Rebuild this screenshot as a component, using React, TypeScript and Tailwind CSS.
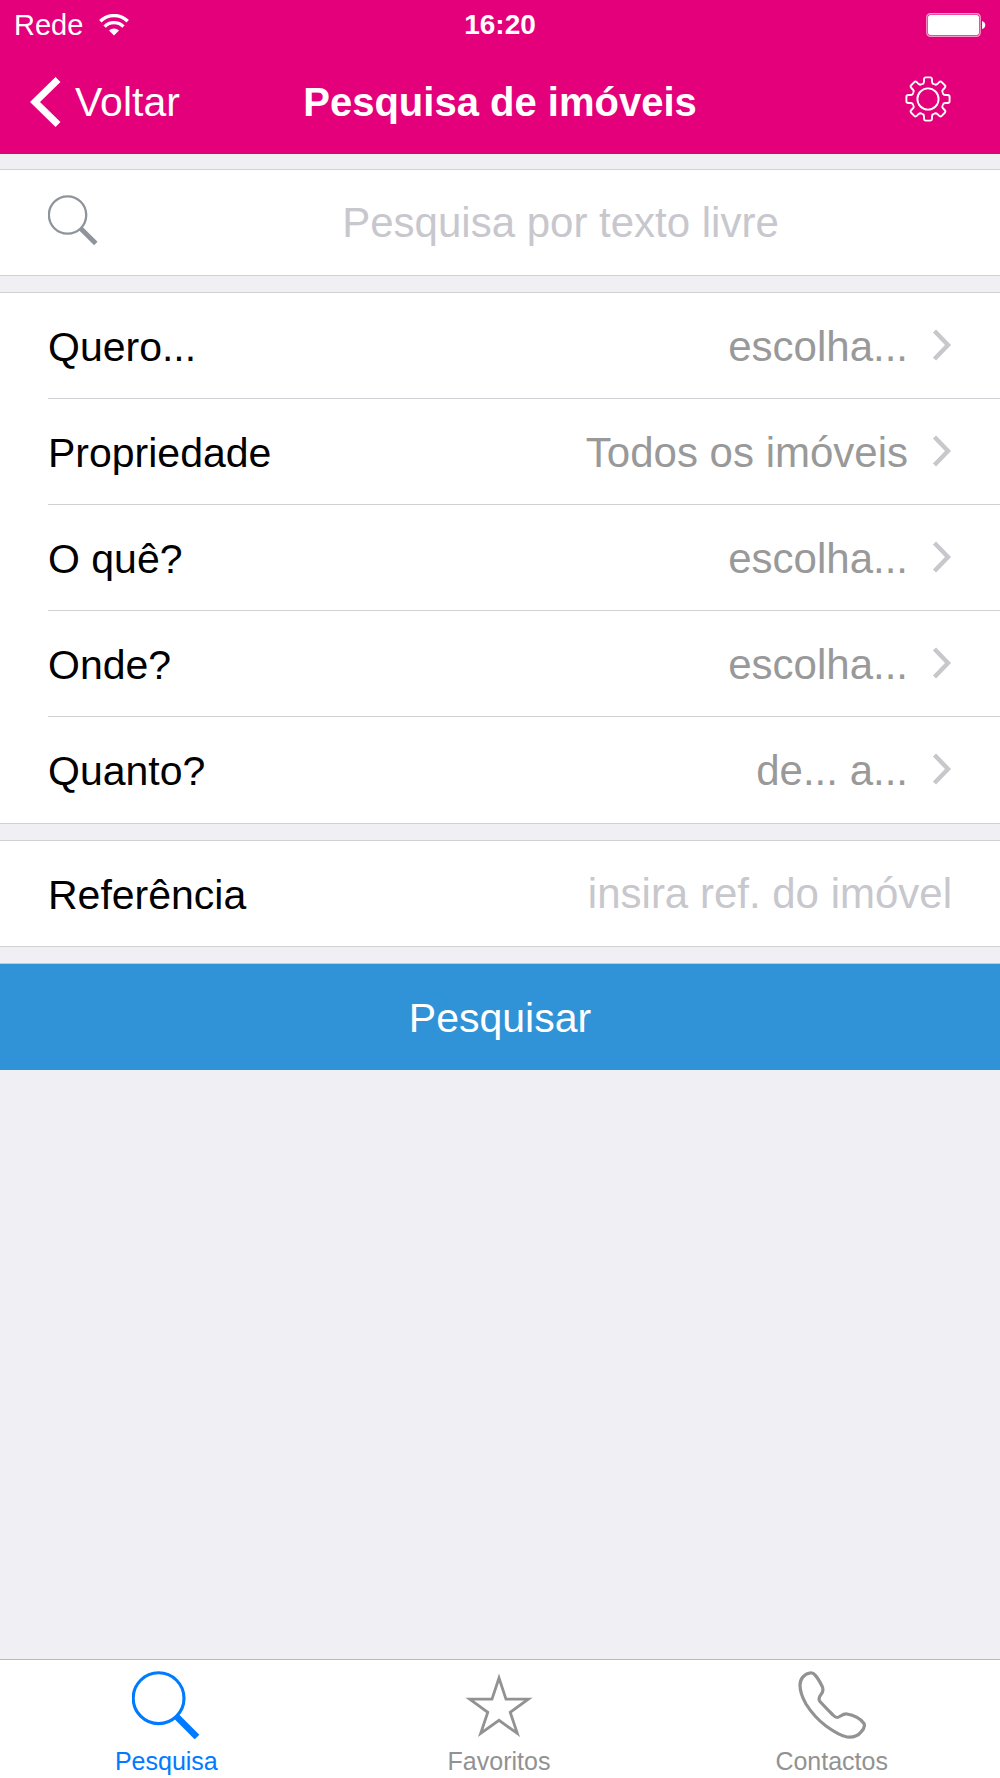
import type { ReactNode } from "react";

type FilterProps = { label: string; value: string }

const filters: FilterProps[] = [
  { label: 'Quero...', value: 'escolha...' },
  { label: 'Propriedade', value: 'Todos os imóveis' },
  { label: 'O quê?', value: 'escolha...' },
  { label: 'Onde?', value: 'escolha...' },
  { label: 'Quanto?', value: 'de... a...' },
];

function SearchIcon({ className }: { className?: string }) {
  return <svg viewBox="0 0 68 68" fill="none" stroke="currentColor" className={className} aria-hidden="true">
    <circle cx="26.6" cy="27.2" r="25.4" strokeWidth="3.1" />
    <path d="M44.5 45.5L65 66" strokeWidth="6.6" />
  </svg>;
}

function StarIcon() {
  return <svg viewBox="0 0 68 68" fill="none" stroke="currentColor" strokeWidth="2.8" strokeMiterlimit="10" className="size-[68px]" aria-hidden="true">
    <path d="M34 7L41 28.2H63.3L45.2 41.3L52.3 62.4L34 49.3L15.7 62.4L22.8 41.3L4.7 28.2H27Z" />
  </svg>;
}

function PhoneIcon() {
  return <svg viewBox="0 0 68 68" fill="none" stroke="currentColor" strokeWidth="3.2" strokeLinejoin="round" className="size-[68px]" aria-hidden="true">
    <path d="M12 2C6 3 2 8 2 14C2 20 4 26 8 33C13 41 20 49 28 55C35 60 42 65 49 66C55 66.5 60 65 63 61C66 58 67 55 66 52.5C63 48 56 44 49 43C44 42.5 42 46.5 39 46.5C37 46.5 36 45 34 43C30 39 26 35 22 30.5C20 28 21 26 23 23.5C25.5 20.5 25.5 18 24 15C22 11 20 7 17 4C15.5 2 14 1.7 12 2Z" />
  </svg>;
}

function GearIcon() {
  return <svg viewBox="-23 -23 46 46" fill="none" stroke="currentColor" strokeWidth="1.9" className="size-[46px]" aria-hidden="true">
    <circle r="10.6" />
    {[0, 45, 90, 135, 180, 225, 270, 315].map(angle => <path
      key={angle}
      transform={`rotate(${angle})`}
      d="M-6.3-15.2Q-4.2-14.6-4-17.5V-19.5Q-3.9-21.6-2.2-21.6H2.2Q3.9-21.6 4-19.5V-17.5Q4.2-14.6 6.3-15.2"
    />)}
  </svg>;
}

function WifiIcon() {
  return <svg viewBox="0 0 30 22" fill="none" stroke="currentColor" strokeWidth="3.4" className="h-[22px] w-[30px]" aria-hidden="true">
    <path d="M1.3 7.2A19.4 19.4 0 0 1 28.7 7.2" />
    <path d="M5.6 12.6A13.2 13.2 0 0 1 24.4 12.6" />
    <path d="M15 21.5L10 16.6A7 7 0 0 1 20 16.6Z" fill="currentColor" stroke="none" />
  </svg>;
}

function BatteryIcon() {
  return <svg viewBox="0 0 60 24" className="h-6 w-[60px]" aria-hidden="true">
    <rect x="0.8" y="0.8" width="53.4" height="22.4" rx="3.5" fill="none" stroke="white" strokeOpacity="0.6" strokeWidth="1.4" />
    <rect x="2" y="2" width="51" height="20" rx="2.5" fill="white" />
    <path d="M56 8Q59.3 9 59.3 12T56 16Z" fill="white" />
  </svg>;
}

function FilterRow({ label, value }: FilterProps) {
  return <li className="ml-12 h-[106px] border-b border-[#d0d0d5] last:border-b-0">
    <button type="button" className="flex h-full w-full items-center pt-0.5 pr-12 text-left">
      <span className="flex-1">{label}</span>
      <span className="text-[42px] text-[#999999]">{value}</span>
      <svg viewBox="0 0 20 34" fill="none" stroke="#c7c7cc" strokeWidth="4.4" className="mb-1 ml-6 h-[34px] w-5" aria-hidden="true">
        <path d="M2.5 3L16 17L2.5 31" />
      </svg>
    </button>
  </li>;
}

function Tab({ label, active, children }: { label: string; active?: boolean; children: ReactNode }) {
  return <a
    href="#"
    aria-current={active ? 'page' : undefined}
    className={`flex flex-1 flex-col items-center pt-[11px] text-[25px] leading-7 ${active ? 'text-[#007aff]' : 'text-[#929292]'}`}
  >
    {children}
    <span className="mt-2">{label}</span>
  </a>;
}

export default function App() {
  return <div className="flex min-h-screen flex-col bg-[#efeff4] font-['Liberation_Sans',Arial,sans-serif] text-[41px] leading-[48px] text-black">
    <header className="bg-[#e4007b] text-white">
      <div className="grid h-[50px] grid-cols-3 items-center pr-[14px] pl-[14px] text-[29px] leading-8">
        <div className="flex items-center gap-4">
          <span>Rede</span>
          <WifiIcon />
        </div>
        <time className="text-center text-[28px] font-bold">16:20</time>
        <div className="flex justify-end">
          <BatteryIcon />
        </div>
      </div>
      <div className="grid h-[104px] grid-cols-[1fr_auto_1fr] items-center">
        <button type="button" className="flex items-center gap-[14px] pl-[29px]">
          <svg viewBox="0 0 32 52" fill="none" stroke="currentColor" strokeWidth="7" className="h-[52px] w-8" aria-hidden="true">
            <path d="M29 3.5L6 26L29 48.5" />
          </svg>
          Voltar
        </button>
        <h1 className="text-[40px] font-bold">Pesquisa de imóveis</h1>
        <button type="button" aria-label="Definições" className="justify-self-end pr-[49px] pb-1.5">
          <GearIcon />
        </button>
      </div>
    </header>

    <main className="flex flex-1 flex-col pt-[15px]">
      <form className="flex flex-col gap-4" onSubmit={e => e.preventDefault()}>
        <label className="flex h-[107px] items-center border-y border-[#d0d0d5] bg-white pl-12">
          <SearchIcon className="mb-1.5 size-[50px] text-[#8e9499]" />
          <input
            type="search"
            aria-label="Pesquisa por texto livre"
            placeholder="Pesquisa por texto livre"
            className="ml-12 min-w-0 flex-1 bg-transparent text-center text-[42px] outline-none placeholder:text-[#c7c7cd]"
          />
        </label>

        <ul className="border-y border-[#d0d0d5] bg-white">
          {filters.map(filter => <FilterRow key={filter.label} {...filter} />)}
        </ul>

        <div className="flex h-[107px] items-center border-y border-[#d0d0d5] bg-white px-12">
          <label htmlFor="reference" className="pt-0.5">Referência</label>
          <input
            id="reference"
            type="text"
            placeholder="insira ref. do imóvel"
            className="min-w-0 flex-1 bg-transparent text-right text-[42px] outline-none placeholder:text-[#c7c7cd]"
          />
        </div>

        <button type="submit" className="h-[107px] border-t border-[#c0c8d0] bg-[#3093d7] pt-0.5 text-white">Pesquisar</button>
      </form>
    </main>

    <nav className="flex h-[119px] border-t border-[#b9b9bb] bg-white pr-0.5">
      <Tab label="Pesquisa" active><SearchIcon className="size-[68px]" /></Tab>
      <Tab label="Favoritos"><StarIcon /></Tab>
      <Tab label="Contactos"><PhoneIcon /></Tab>
    </nav>
  </div>;
}
